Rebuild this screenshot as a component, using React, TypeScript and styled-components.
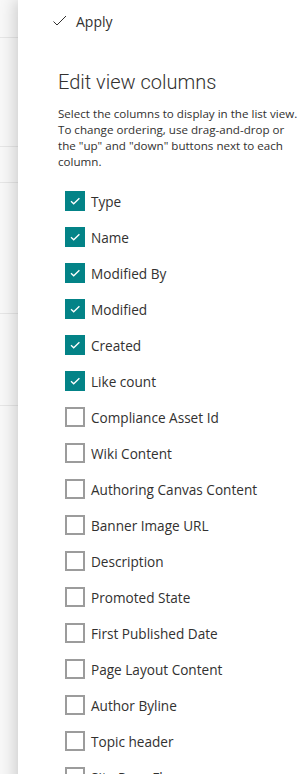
import styled, { createGlobalStyle } from "styled-components";

const GlobalStyle = createGlobalStyle`
  html, body {
    margin: 0;
    padding: 0;
    background: #ffffff;
    overflow: hidden;
  }
  body {
    font-family: "Open Sans", "Noto Sans", sans-serif;
    color: #323130;
  }
`;

const Page = styled.div`
  display: flex;
  align-items: flex-start;
  width: 306px;
  height: 774px;
  overflow: hidden;
`;

const Backdrop = styled.div`
  width: 18px;
  height: 774px;
  flex-shrink: 0;
  display: flex;
  flex-direction: column;
  background: #f8f8f8;
`;

const BackdropRow = styled.div<{ $h: number }>`
  height: ${(p) => p.$h}px;
  flex-shrink: 0;
  border-bottom: 1px solid #e6e6e6;
`;

const Panel = styled.div`
  position: relative;
  z-index: 1;
  flex: 1;
  min-height: 774px;
  background: #ffffff;
  box-shadow: -4px 0 14px rgba(0, 0, 0, 0.16);
  padding-left: 40px;
`;

const CommandBar = styled.div`
  height: 42px;
  display: flex;
  align-items: center;
  gap: 8px;
  margin-left: -6px;
`;

const ApplyLabel = styled.span`
  font-size: 14px;
  color: #323130;
`;

const Title = styled.h2`
  margin: 26px 0 0;
  font-family: "Roboto", "Open Sans", sans-serif;
  font-size: 20px;
  font-weight: 300;
  line-height: 28px;
  color: #323130;
`;

const Description = styled.p`
  margin: 10px 0 0;
  padding-right: 8px;
  font-size: 11.6px;
  line-height: 16px;
  color: #323130;
`;

const List = styled.div`
  display: flex;
  flex-direction: column;
  margin-top: 13px;
  padding-left: 7px;
`;

const Row = styled.label`
  height: 36px;
  display: flex;
  align-items: center;
  gap: 6px;
  flex-shrink: 0;
`;

const Box = styled.span<{ $checked: boolean }>`
  width: 20px;
  height: 20px;
  box-sizing: border-box;
  flex-shrink: 0;
  display: flex;
  align-items: center;
  justify-content: center;
  background: ${(p) => (p.$checked ? "#038387" : "#ffffff")};
  border: ${(p) => (p.$checked ? "none" : "2px solid #9c9c9c")};
`;

const Label = styled.span`
  font-size: 13.6px;
  color: #323130;
`;

const columns: { name: string; checked: boolean }[] = [
  { name: "Type", checked: true },
  { name: "Name", checked: true },
  { name: "Modified By", checked: true },
  { name: "Modified", checked: true },
  { name: "Created", checked: true },
  { name: "Like count", checked: true },
  { name: "Compliance Asset Id", checked: false },
  { name: "Wiki Content", checked: false },
  { name: "Authoring Canvas Content", checked: false },
  { name: "Banner Image URL", checked: false },
  { name: "Description", checked: false },
  { name: "Promoted State", checked: false },
  { name: "First Published Date", checked: false },
  { name: "Page Layout Content", checked: false },
  { name: "Author Byline", checked: false },
  { name: "Topic header", checked: false },
  { name: "Site Page Flags", checked: false },
];

function CheckMark() {
  return (
    <svg width="20" height="20" viewBox="0 0 20 20">
      <polyline
        points="6,10.2 8.7,12.8 14.4,7.2"
        fill="none"
        stroke="#ffffff"
        strokeWidth="1.3"
      />
    </svg>
  );
}

export default function App() {
  return (
    <Page>
      <GlobalStyle />
      <Backdrop>
        <BackdropRow $h={37} />
        <BackdropRow $h={108} />
        <BackdropRow $h={35} />
        <BackdropRow $h={130} />
        <BackdropRow $h={91} />
      </Backdrop>
      <Panel>
        <CommandBar>
          <svg width="16" height="16" viewBox="0 0 16 16">
            <polyline
              points="1.5,8.5 5,12 14,3"
              fill="none"
              stroke="#323130"
              strokeWidth="1"
            />
          </svg>
          <ApplyLabel>Apply</ApplyLabel>
        </CommandBar>
        <Title>Edit view columns</Title>
        <Description>
          Select the columns to display in the list view. To change ordering,
          use drag-and-drop or the "up" and "down" buttons next to each column.
        </Description>
        <List>
          {columns.map((c) => (
            <Row key={c.name}>
              <Box $checked={c.checked}>{c.checked && <CheckMark />}</Box>
              <Label>{c.name}</Label>
            </Row>
          ))}
        </List>
      </Panel>
    </Page>
  );
}
